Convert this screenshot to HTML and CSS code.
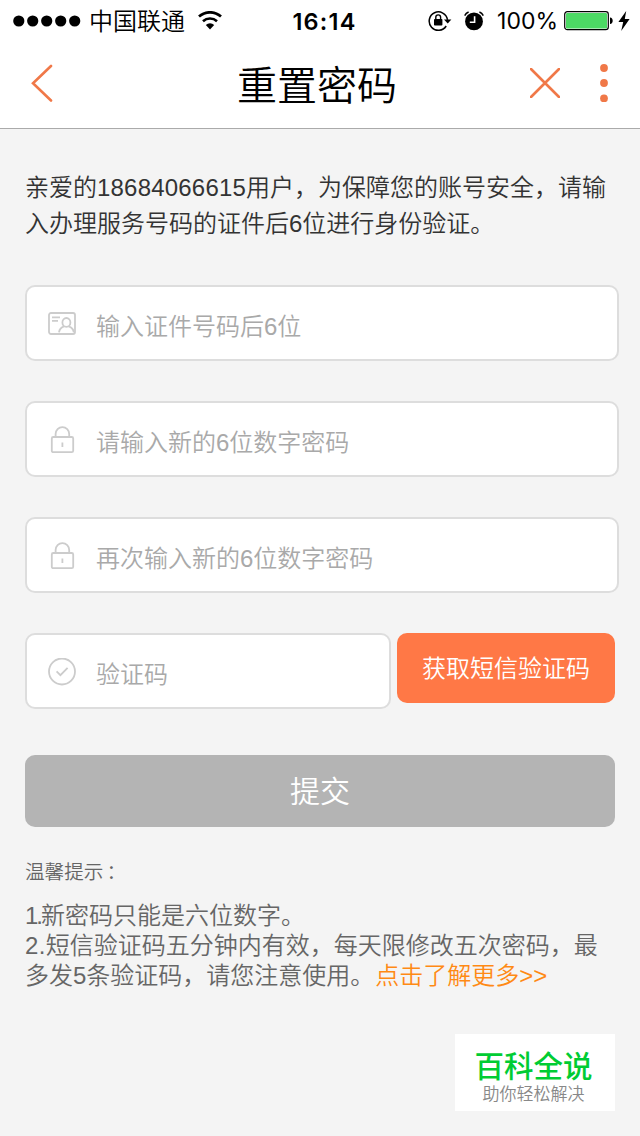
FILE: index.html
```
<!DOCTYPE html>
<html lang="zh-CN">
<head>
    <meta charset="UTF-8">
    <meta name="viewport" content="width=device-width, initial-scale=1.0">
    <title>重置密码</title>
    <link rel="stylesheet" href="styles.css">
</head>
<body>
    <div class="status-bar">
        <div class="status-left">
            <svg class="signal" width="68" height="12" viewBox="0 0 68 12">
                <circle cx="5.8" cy="6" r="5.6"/>
                <circle cx="19.7" cy="6" r="5.6"/>
                <circle cx="33.7" cy="6" r="5.6"/>
                <circle cx="47.7" cy="6" r="5.6"/>
                <circle cx="61.7" cy="6" r="5.6"/>
            </svg>
            <span class="carrier">中国联通</span>
            <svg class="wifi" width="26" height="20" viewBox="0 0 26 20">
                <path d="M2 5.6a16.2 16.2 0 0 1 22 0" fill="none" stroke="#000" stroke-width="2.7"/>
                <path d="M6 10.2a10.5 10.5 0 0 1 14 0" fill="none" stroke="#000" stroke-width="2.6"/>
                <path d="M13 18.4l-4.2-4.4a6.2 6.2 0 0 1 8.4 0z"/>
            </svg>
        </div>
        <span class="time">16:14</span>
        <div class="status-right">
            <svg class="rotation" width="24" height="22" viewBox="0 0 24 22">
                <path d="M18.2 16a9.2 9.2 0 1 1 1.3-6.2" fill="none" stroke="#000" stroke-width="1.5"/>
                <path d="M16 9.4h7.4l-3.7 4.2z"/>
                <rect x="6" y="9" width="8.4" height="6.5" rx=".8"/>
                <path d="M7.8 9.5V7.3a2.4 2.4 0 0 1 4.8 0v2.2" fill="none" stroke="#000" stroke-width="1.4"/>
            </svg>
            <svg class="alarm" width="20" height="20" viewBox="0 0 20 20">
                <circle cx="10" cy="10.4" r="8.9"/>
                <path d="M.7 4.6A8 8 0 0 1 4.6 1M15.4 1a8 8 0 0 1 3.9 3.6" fill="none" stroke="#000" stroke-width="1.5"/>
                <path d="M10.6 5.2v6H5.8" fill="none" stroke="#fff" stroke-width="1.6"/>
            </svg>
            <span class="percent">100%</span>
            <svg class="battery" width="50" height="20" viewBox="0 0 50 20">
                <rect x=".7" y=".7" width="43.6" height="18" rx="2.6" fill="#fff" stroke="#000" stroke-width="1.2"/>
                <rect x="2" y="2" width="41" height="15.4" rx="1.2" fill="#4cd964"/>
                <path d="M46 6.6c3.6 0 3.6 6.4 0 6.4z"/>
            </svg>
            <svg class="bolt" width="12" height="20" viewBox="0 0 12 20">
                <path d="M8.2 0L.4 11h4.8L3.2 20 11.6 8H6.8z"/>
            </svg>
        </div>
    </div>

    <header class="nav-bar">
        <svg class="back" width="22" height="38" viewBox="0 0 22 38">
            <path d="M20 2L2 19.3 20 36.5"/>
        </svg>
        <h1>重置密码</h1>
        <div class="nav-actions">
            <svg class="close" width="30" height="30" viewBox="0 0 30 30">
                <path d="M1 1l28 28M29 1L1 29"/>
            </svg>
            <svg class="more" width="8" height="38" viewBox="0 0 8 38">
                <circle cx="4" cy="4" r="3.9"/>
                <circle cx="4" cy="19" r="3.9"/>
                <circle cx="4" cy="34.4" r="3.9"/>
            </svg>
        </div>
    </header>

    <main class="content">
        <p class="intro">亲爱的<span class="phone">18684066615</span>用户，为保障您的账号安全，请输入办理服务号码的证件后6位进行身份验证。</p>

        <form class="reset-form">
            <label class="field">
                <svg class="field-icon" width="28" height="28" viewBox="0 0 28 28">
                    <rect x="1" y="3" width="26" height="21" rx="2"/>
                    <path d="M4 7.4h8M4 10.8h6"/>
                    <ellipse cx="18.4" cy="12.4" rx="4" ry="4.4"/>
                    <path d="M11 22.4c.4-3.2 2.4-5.2 5.2-6M20.6 16.4c2.8.8 4.8 2.8 5.2 6"/>
                </svg>
                <input type="text" placeholder="输入证件号码后6位">
            </label>
            <label class="field">
                <svg class="field-icon" width="28" height="28" viewBox="0 0 28 28">
                    <rect x="3.8" y="11" width="21.4" height="15.2" rx="1.5"/>
                    <path d="M7.6 10.8V8a6.8 6.8 0 0 1 13.6 0v2.8M14.4 16.4v4.6"/>
                </svg>
                <input type="text" placeholder="请输入新的6位数字密码">
            </label>
            <label class="field">
                <svg class="field-icon" width="28" height="28" viewBox="0 0 28 28">
                    <rect x="3.8" y="11" width="21.4" height="15.2" rx="1.5"/>
                    <path d="M7.6 10.8V8a6.8 6.8 0 0 1 13.6 0v2.8M14.4 16.4v4.6"/>
                </svg>
                <input type="text" placeholder="再次输入新的6位数字密码">
            </label>
            <div class="code-row">
                <label class="field">
                    <svg class="field-icon" width="28" height="28" viewBox="0 0 28 28">
                        <circle cx="14" cy="13.5" r="13"/>
                        <path d="M8.6 13.4l3.8 3.8 7.2-7.4"/>
                    </svg>
                    <input type="text" placeholder="验证码">
                </label>
                <button type="button" class="sms-btn">获取短信验证码</button>
            </div>
            <button type="button" class="submit-btn">提交</button>
        </form>

        <section class="tips">
            <h2>温馨提示<span class="colon">：</span></h2>
            <p><span class="first-num">1.</span>新密码只能是六位数字。</p>
            <p><span class="second-num">2.</span>短信验证码五分钟内有效，每天限修改五次密码，最多发5条验证码，请您注意使用。<a href="#">点击了解更多&gt;&gt;</a></p>
        </section>
    </main>

    <div class="brand-badge">
        <strong>百科全说</strong>
        <span>助你轻松解决</span>
    </div>
</body>
</html>
```
FILE: styles.css
```
* {
    box-sizing: border-box;
}
body {
    margin: 0;
    height: 1136px;
    position: relative;
    overflow: hidden;
    background-color: #f4f4f4;
    color: #333;
    font-family: "Liberation Sans", "Noto Sans CJK SC", sans-serif;
    font-weight: 350;
}
svg {
    display: block;
    flex: none;
}
.status-bar {
    display: grid;
    grid-template-columns: 1fr auto 1fr;
    align-items: center;
    height: 41px;
    padding: 0 10px 0 13px;
    background-color: #fff;
    color: #000;
    font-size: 24px;
    line-height: 41px;
}
.status-left,
.status-right {
    display: flex;
    align-items: center;
}
.status-right {
    justify-content: flex-end;
}
.carrier {
    margin: 0 12px 0 8px;
    padding-top: 1px;
}
.time {
    font-family: Inter, sans-serif;
    font-size: 23.5px;
    font-weight: 600;
    letter-spacing: 1.2px;
    margin-left: 6px;
    padding-top: 1px;
}
.alarm {
    margin: 0 13px 0 12px;
}
.percent {
    font-family: Inter, sans-serif;
    font-size: 23px;
    font-weight: 400;
    margin-right: 6px;
    padding-top: 1px;
}
.bolt {
    margin-left: 4px;
}
.nav-bar {
    display: grid;
    grid-template-columns: 1fr auto 1fr;
    align-items: center;
    height: 88px;
    padding: 0 32px 3px 31px;
    background-color: #fff;
    border-bottom: 1px solid #aaa;
}
.nav-bar h1 {
    margin: 6px 5px 0 0;
    color: #000;
    font-size: 40px;
    font-weight: 350;
    line-height: 56px;
}
.nav-actions {
    display: flex;
    align-items: center;
    justify-content: flex-end;
    gap: 40px;
}
.back,
.close {
    fill: none;
    stroke: #f07848;
    stroke-width: 2.6;
    stroke-linecap: round;
}
.more {
    fill: #f07848;
}
.content {
    padding: 41px 25px 0;
}
.intro {
    margin: 0 -4px 43px 0;
    font-size: 24px;
    line-height: 36px;
}
.phone {
    letter-spacing: 0.2px;
}
.reset-form {
    display: flex;
    flex-direction: column;
    gap: 40px;
}
.field {
    display: flex;
    align-items: center;
    height: 76px;
    margin-right: -4px;
    padding: 0 21px;
    background-color: #fff;
    border: 2px solid #ddd;
    border-radius: 10px;
}
.field-icon {
    margin: 2px 20px 0 0;
    fill: none;
    stroke: #ccc;
    stroke-width: 1.8;
}
.field input {
    flex: 1;
    min-width: 0;
    height: 40px;
    margin-top: 8px;
    padding: 0;
    border: 0;
    outline: 0;
    background: none;
    font: inherit;
    font-size: 24px;
}
.field input::placeholder {
    color: #a9a9a9;
}
.code-row {
    display: flex;
    align-items: flex-start;
    gap: 6px;
}
.code-row .field {
    flex: 1;
    min-width: 0;
    margin-right: 0;
}
.sms-btn,
.submit-btn {
    padding: 0 0 4px;
    border: 0;
    border-radius: 10px;
    color: #fff;
    font: inherit;
}
.sms-btn {
    flex: none;
    width: 218px;
    height: 70px;
    background-color: #ff7846;
    font-size: 24px;
}
.submit-btn {
    height: 72px;
    margin-top: 6px;
    background-color: #b4b4b4;
    font-size: 30px;
}
.tips {
    margin-top: 30px;
    margin-right: -4px;
    color: #666;
    font-size: 24px;
    line-height: 30px;
}
.tips h2 {
    margin: 0 0 14px;
    font-size: 19.6px;
    font-weight: 350;
}
.colon {
    margin-left: 3px;
}
.tips p {
    margin: 0;
}
.tips a {
    margin-left: 1px;
    color: #ff8a14;
    text-decoration: none;
}
.first-num {
    letter-spacing: -2px;
}
.second-num {
    letter-spacing: 0.4px;
}
.brand-badge {
    position: absolute;
    right: 25px;
    bottom: 25px;
    display: flex;
    flex-direction: column;
    align-items: center;
    width: 160px;
    height: 77px;
    padding: 16px 3px 0 0;
    background-color: #fff;
}
.brand-badge strong {
    color: #0c3;
    font-size: 29.5px;
    font-weight: 500;
    line-height: 34px;
}
.brand-badge span {
    color: #888;
    font-size: 17px;
    line-height: 22px;
}
```
